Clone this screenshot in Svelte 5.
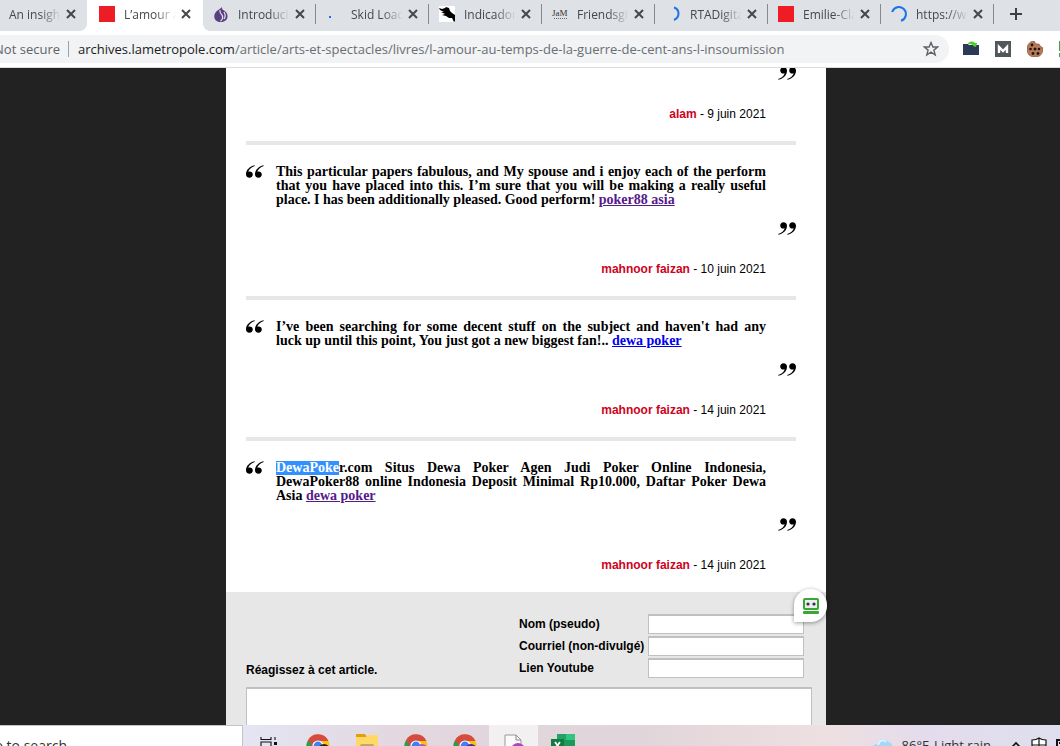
<script lang="ts">
    type Tab = { title: string; icon: string; active?: boolean };
    type Comment = { lines: string[]; selected?: string; link?: string; visited?: boolean; author: string; date: string };

    // Browser tabs, left to right
    const tabs: Tab[] = [
        { title: 'An insight', icon: 'yellow' },
        { title: 'L’amour au', icon: 'red', active: true },
        { title: 'Introducin', icon: 'tor' },
        { title: 'Skid Load', icon: 'dot' },
        { title: 'Indicador', icon: 'bird' },
        { title: 'Friendsgiv', icon: 'jam' },
        { title: 'RTADigital', icon: 'arc' },
        { title: 'Emilie-Cla', icon: 'red' },
        { title: 'https://ww', icon: 'spinner' }
    ];

    const comments: Comment[] = [
        { lines: [], author: 'alam', date: '9 juin 2021' },
        {
            lines: [
                'This particular papers fabulous, and My spouse and i enjoy each of the perform',
                'that you have placed into this. I’m sure that you will be making a really useful',
                'place. I has been additionally pleased. Good perform!'
            ],
            link: 'poker88 asia',
            visited: true,
            author: 'mahnoor faizan',
            date: '10 juin 2021'
        },
        {
            lines: [
                "I’ve been searching for some decent stuff on the subject and haven't had any",
                'luck up until this point, You just got a new biggest fan!..'
            ],
            link: 'dewa poker',
            author: 'mahnoor faizan',
            date: '14 juin 2021'
        },
        {
            selected: 'DewaPoke',
            lines: [
                'r.com Situs Dewa Poker Agen Judi Poker Online Indonesia,',
                'DewaPoker88 online Indonesia Deposit Minimal Rp10.000, Daftar Poker Dewa',
                'Asia'
            ],
            link: 'dewa poker',
            visited: true,
            author: 'mahnoor faizan',
            date: '14 juin 2021'
        }
    ];

    const fields = [
        { id: 'nom', label: 'Nom (pseudo)' },
        { id: 'courriel', label: 'Courriel (non-divulgé)' },
        { id: 'youtube', label: 'Lien Youtube' }
    ];

    const quotePath =
        'M5.4 .2C7.700 .2 9 1.700 9 3.800C9 8 5.500 11.600 .5 12.800L.2 12.100C3.700 10.800 6 8.800 6.800 6.200C4.500 7.200 2.200 5.800 2.200 3.400C2.200 1.600 3.600 .2 5.400 .2Z';
</script>

{#snippet favicon(kind: string)}
    <svg class="favicon" viewBox="0 0 16 16" aria-hidden="true">
        {#if kind === 'yellow'}
            <rect width="16" height="16" fill="#ffee00" />
        {:else if kind === 'red'}
            <rect width="16" height="16" fill="#ee1c25" />
        {:else if kind === 'tor'}
            <path d="M8.500 1C9.500 2.500 8.500 3 11 4.500C17 8 15 16 8 16C0 16 -.5 8 4.500 4.500C6.500 3.200 8 2.500 8.500 1Z" fill="#59407f" />
            <path d="M7 4C6 7 9 8 9.500 10S9 14 7.500 15M11 6C12.500 8.500 12.500 11 11 13" fill="none" stroke="#e8e0f0" stroke-width="1.2" />
        {:else if kind === 'dot'}
            <rect x="3" y="10" width="2" height="2" fill="#1a73e8" />
        {:else if kind === 'bird'}
            <rect width="16" height="16" fill="#fff" />
            <path d="M0 2L3 3L6 2L7 1L10 2L11 5L13 7L16 9V15L15 16L13 12L10 12L7 10L3 9L6 8L2 6L5 6L1 4Z" fill="#000" />
        {:else if kind === 'jam'}
            <text x="0" y="10" font-family="Liberation Serif" font-size="9" fill="#333">JaM</text>
            <path d="M2 12.500H15" stroke="#666" stroke-dasharray="1 1" />
        {:else if kind === 'arc'}
            <path d="M9 1.500C15 3.500 15 11.500 9 14" fill="none" stroke="#1a73e8" stroke-width="2" />
        {:else}
            <path d="M1.200 6A7 7 0 1 1 10 14.700" fill="none" stroke="#1a73e8" stroke-width="2" />
        {/if}
    </svg>
{/snippet}

{#snippet chrome(badge: string)}
    <svg width="24" height="24" viewBox="0 0 24 24" aria-hidden="true">
        <circle cx="12" cy="12" r="11.500" fill="#fbc116" />
        <path d="M12 12L2 6.200A11.500 11.500 0 0 0 12 23.500L17 15Z" fill="#21a05a" />
        <path d="M2 6.200A11.500 11.500 0 0 1 22.500 7H12L7 13Z" fill="#d64b3f" />
        <circle cx="12" cy="12" r="5.600" fill="#fff" />
        <circle cx="12" cy="12" r="4.400" fill="#3b82f6" />
        <circle cx="18" cy="16" r="6" fill={badge} />
    </svg>
{/snippet}

<div class="window">
    <nav class="tabs">
        {#each tabs as tab, i}
            <div class="tab" class:active={tab.active} class:first={i === 0}>
                {@render favicon(tab.icon)}
                <span class="title">{tab.title}</span>
                <button class="close" aria-label="Close tab">
                    <svg width="10" height="10" viewBox="0 0 10 10"><path d="M1 1L9 9M9 1L1 9" stroke="#44474b" stroke-width="2" /></svg>
                </button>
            </div>
        {/each}
        <button class="new-tab" aria-label="New tab">
            <svg width="12" height="12" viewBox="0 0 12 12"><path d="M6 0V12M0 6H12" stroke="#3c4043" stroke-width="2" /></svg>
        </button>
    </nav>

    <div class="toolbar">
        <div class="omnibox">
            <span class="secure">Not secure</span>
            <span class="url">archives.lametropole.com<span class="path">/article/arts-et-spectacles/livres/l-amour-au-temps-de-la-guerre-de-cent-ans-l-insoumission</span></span>
            <button class="star" aria-label="Bookmark">
                <svg width="16" height="16" viewBox="0 0 16 16"><path d="M8 1.500L9.900 6H14.600L10.900 9.100L12.200 14L8 11.200L3.800 14L5.100 9.100L1.400 6H6.100Z" fill="none" stroke="#5f6368" stroke-width="1.400" /></svg>
            </button>
        </div>
        <div class="extensions">
            <svg width="16" height="16" viewBox="0 0 16 16">
                <path d="M0 3H5L6 4H16V14H0Z" fill="#2c3a56" />
                <path d="M5 3C6 0 10 0 12 2L14 2L13 6L10 5L10 4C8 3 7 3 5 3Z" fill="#4bd32c" />
            </svg>
            <svg width="16" height="16" viewBox="0 0 16 16">
                <rect width="16" height="16" fill="#50575a" />
                <path d="M4 12V6L8 10L12 6V12" fill="none" stroke="#fff" stroke-width="2.400" />
            </svg>
            <svg width="16" height="16" viewBox="0 0 16 16">
                <path d="M7 0L9 3L12 3L13 5L16 7C16 13 13 16 8 16C3 16 0 13 0 8C0 4 3 0 7 0Z" fill="#b87a57" stroke="#6f4128" stroke-width=".6" />
                <g fill="#24140e"><circle cx="5" cy="4" r="1.400" /><circle cx="3.500" cy="8" r="1.300" /><circle cx="8" cy="8" r="1.500" /><circle cx="12" cy="8" r="1.300" /><circle cx="6" cy="12.500" r="1.400" /><circle cx="11" cy="12.500" r="1.400" /></g>
            </svg>
            <svg width="16" height="16" viewBox="0 0 16 16"><rect width="16" height="16" fill="#43a047" /><rect y="10" width="16" height="2" fill="#fff" /></svg>
        </div>
    </div>

    <main>
        <article>
            {#each comments as comment}
                <section class="comment">
                    {#if comment.lines.length}
                        <div class="body">
                            <svg class="open" width="18" height="13" viewBox="0 0 18 13" aria-hidden="true">
                                <g transform="rotate(180 9 6.500)"><path d={quotePath} /><path d={quotePath} transform="translate(9 0)" /></g>
                            </svg>
                            <p>
                                {#each comment.lines as line, n}
                                    <span class="line" class:last={n === comment.lines.length - 1}
                                        >{#if n === 0 && comment.selected}<mark>{comment.selected}</mark>{/if}{line}{#if n === comment.lines.length - 1}{' '}<a href="#lien" class:visited={comment.visited}>{comment.link}</a>{/if}</span
                                    >
                                {/each}
                            </p>
                        </div>
                    {/if}
                    <svg class="end" width="18" height="13" viewBox="0 0 18 13" aria-hidden="true">
                        <path d={quotePath} /><path d={quotePath} transform="translate(9 0)" />
                    </svg>
                    <div class="meta"><span class="author">{comment.author}</span> - {comment.date}</div>
                </section>
            {/each}

            <form>
                <div class="form-top">
                    <label for="message">Réagissez à cet article.</label>
                    <div class="fields">
                        {#each fields as field}
                            <label for={field.id}>{field.label}</label>
                            <input id={field.id} type="text" />
                        {/each}
                    </div>
                </div>
                <textarea id="message"></textarea>
                <!-- Password manager bubble over the form corner -->
                <button type="button" class="bubble" aria-label="RoboForm">
                    <svg width="16" height="16" viewBox="0 0 16 16">
                        <rect x="1" y="1" width="14" height="10" rx="1" fill="#ececf2" stroke="#38a832" stroke-width="2" />
                        <circle cx="5" cy="6" r="1.600" fill="#333" /><circle cx="11" cy="6" r="1.600" fill="#333" />
                        <rect y="13" width="16" height="3" rx="1" fill="#38a832" />
                    </svg>
                </button>
            </form>
        </article>
    </main>

    <footer>
        <div class="taskbar">
            <div class="search">Type here to search</div>
            <div class="slot">
                <svg width="18" height="16" viewBox="0 0 18 16"><path d="M1 0V2.500H11V0M1 16V5H11V16M15 0V3M15 10V16" fill="none" stroke="#111" stroke-width="1.100" /><rect x="14" y="5" width="3" height="3" fill="#111" /></svg>
            </div>
            <div class="slot">{@render chrome('#2b211e')}</div>
            <div class="slot">
                <svg width="22" height="20" viewBox="0 0 22 20"><path d="M0 0H9L11 3H0Z" fill="#dfa00c" /><path d="M0 3H10L12 1H22V20H0Z" fill="#ffd866" /><rect x="4" y="10" width="14" height="8" rx="2" fill="#b8aa70" /></svg>
            </div>
            <div class="slot">{@render chrome('#a05bd0')}</div>
            <div class="slot">{@render chrome('#4a24a6')}</div>
            <div class="slot current">
                <svg width="20" height="24" viewBox="0 0 20 24"><path d="M1 1H12L17 6V23H1Z" fill="#fafafa" stroke="#999" /><path d="M12 1V6H17" fill="none" stroke="#888" /><circle cx="14" cy="16" r="7" fill="#ab47bc" /></svg>
            </div>
            <div class="slot">
                <svg width="24" height="22" viewBox="0 0 24 22"><rect x="6" width="9" height="11" fill="#21a366" /><rect x="15" width="9" height="6" fill="#33c481" /><rect x="6" y="6" width="18" height="16" fill="#1b9a5b" /><rect y="5" width="13" height="13" fill="#107c41" /><path d="M4 8L9 15M9 8L4 15" stroke="#fff" stroke-width="1.800" /></svg>
            </div>
            <div class="tray">
                <svg width="22" height="14" viewBox="0 0 22 14"><path d="M2 14C-1 10 2 6 6 6C7 1 15-1 17 4C21 4 23 9 20 14Z" fill="#a5d8f5" /><path d="M7 7C8 2 13 1 15 4" fill="none" stroke="#dff3ff" stroke-width="2" /></svg>
                <span class="weather">86°F <span>Light rain</span></span>
                <svg class="up" width="12" height="8" viewBox="0 0 12 8"><path d="M1 7L6 2L11 7" fill="none" stroke="#111" stroke-width="1.600" /></svg>
                <svg width="16" height="16" viewBox="0 0 16 16"><path d="M8 1C6 2.500 3 3 1 3V8C1 12 4 14 8 15.500C12 14 15 12 15 8V3C13 3 10 2.500 8 1ZM8 1V15M1 8H15" fill="#fff" stroke="#111" stroke-width="1.200" /></svg>
                <svg class="cut" width="4" height="16" viewBox="0 0 4 16"><path d="M4 3H1V12H4M3 6H4" fill="none" stroke="#111" stroke-width="2" /></svg>
            </div>
        </div>
    </footer>
</div>

<style>
    :global(body) {
        margin: 0;
    }

    .window {
        display: flex;
        flex-direction: column;
        height: 100vh;
        overflow: hidden;
        background: #222;
        font-family: 'Open Sans', 'Noto Sans', sans-serif;
    }

    button {
        display: flex;
        padding: 0;
        border: 0;
        background: none;
    }

    svg {
        flex: none;
    }

    /* Tab strip */
    .tabs {
        display: flex;
        flex: none;
        height: 31px;
        overflow: hidden;
        background: #dee1e6;
        color: #45484d;
        font-size: 12px;
    }

    .tab {
        position: relative;
        display: flex;
        flex: none;
        align-items: center;
        box-sizing: border-box;
        width: 113px;
        height: 28px;
        padding: 0 11px 0 10px;
    }

    .tab.first {
        justify-content: flex-end;
        width: 87px;
        overflow: hidden;
    }

    .tab:not(.active, .first)::after {
        content: '';
        position: absolute;
        top: 4px;
        right: 0;
        width: 1px;
        height: 20px;
        background: #85888d;
    }

    .tab.active {
        width: 116px;
        height: 31px;
        padding: 0 12px 3px;
        background: #fff;
    }

    .tab.active::before,
    .tab.active::after {
        content: '';
        position: absolute;
        bottom: 0;
        width: 8px;
        height: 8px;
    }

    .tab.active::before {
        right: 100%;
        background: radial-gradient(circle at 0 0, transparent 8px, #fff 8px);
    }

    .tab.active::after {
        left: 100%;
        background: radial-gradient(circle at 100% 0, transparent 8px, #fff 8px);
    }

    .favicon {
        width: 16px;
        height: 16px;
    }

    .title {
        flex: none;
        width: 52px;
        margin: 0 5px 0 9px;
        overflow: hidden;
        white-space: nowrap;
        mask-image: linear-gradient(to right, #000 60%, transparent);
    }

    .new-tab {
        align-items: center;
        height: 28px;
        margin-left: 16px;
    }

    /* Address bar */
    .toolbar {
        display: flex;
        flex: none;
        align-items: center;
        height: 36px;
        border-bottom: 1px solid #dadce0;
        background: #fff;
        overflow: hidden;
    }

    .omnibox {
        display: flex;
        flex: 1;
        align-items: center;
        min-width: 0;
        height: 28px;
        border-radius: 0 14px 14px 0;
        background: #f1f3f4;
        font-size: 13px;
        white-space: nowrap;
    }

    .secure {
        display: flex;
        justify-content: flex-end;
        width: 60px;
        margin-right: 8px;
        color: #5f6368;
    }

    .url {
        position: relative;
        flex: 1;
        padding-left: 10px;
        color: #202124;
    }

    .url::before {
        content: '';
        position: absolute;
        top: 1px;
        left: 0;
        width: 1px;
        height: 16px;
        background: #9aa0a6;
    }

    .path {
        color: #6a6e73;
    }

    .star {
        margin-right: 10px;
    }

    .extensions {
        display: flex;
        flex: none;
        gap: 16px;
        width: 97px;
        padding-left: 14px;
    }

    /* Page */
    main {
        flex: 1;
        min-height: 0;
        padding-right: 8px;
        overflow: hidden;
    }

    article {
        max-width: 600px;
        margin: -1px auto 0;
        background: #fff;
        font-family: 'Liberation Sans', Arial, sans-serif;
        font-size: 12px;
        line-height: 14px;
    }

    .comment {
        display: flex;
        flex-direction: column;
        margin: 0 30px 0 20px;
        padding-bottom: 20px;
    }

    .comment + .comment {
        padding-top: 20px;
        border-top: 4px solid #e7e7e7;
    }

    .body {
        display: flex;
        gap: 12px;
        margin: 0 30px 15px 0;
    }

    p {
        flex: 1;
        margin: 0;
        font-family: 'Liberation Serif', Georgia, serif;
        font-size: 14px;
        font-weight: bold;
    }

    .line {
        display: block;
        text-align-last: justify;
        white-space: nowrap;
    }

    .line.last {
        text-align-last: left;
    }

    mark {
        display: inline-block;
        background: #3390ff;
        color: #fff;
    }

    p a {
        color: #00e;
    }

    p a.visited {
        color: #551a8b;
    }

    .end {
        align-self: flex-end;
    }

    .meta {
        margin: 27px 30px 0 0;
        text-align: right;
    }

    .author {
        color: #d0021b;
        font-weight: bold;
    }

    /* Reply form */
    form {
        position: relative;
        padding: 22px 14px 0 20px;
        background: #e7e7e7;
        font-weight: bold;
    }

    .form-top {
        display: flex;
        align-items: flex-end;
        justify-content: space-between;
        margin: 0 8px 9px 0;
    }

    .form-top > label {
        margin-bottom: 1px;
    }

    .fields {
        display: grid;
        grid-template-columns: 129px 156px;
        row-gap: 2px;
    }

    .fields label {
        line-height: 20px;
    }

    input,
    textarea {
        display: block;
        box-sizing: border-box;
        border: 1px solid #c0c0c0;
        border-top-width: 2px;
        background: #fff;
    }

    input {
        width: 100%;
        height: 20px;
    }

    textarea {
        width: 100%;
        height: 120px;
        resize: none;
    }

    .bubble {
        position: absolute;
        top: -3px;
        right: -1px;
        align-items: center;
        justify-content: center;
        width: 33px;
        height: 33px;
        border-radius: 16px 16px 16px 0;
        background: #fff;
        box-shadow: 0 1px 4px rgba(0, 0, 0, 0.4);
    }

    /* Taskbar, cut off by the lower edge of the window */
    footer {
        flex: none;
        height: 21px;
        overflow: hidden;
        background: linear-gradient(to right, #e4e4f2 24%, #e3d7e0 38%, #e0d5da 60%, #eee0e1 78%, #e4dcec 87%, #dedfee);
    }

    .taskbar {
        display: flex;
        height: 40px;
        color: #333;
        font-size: 14px;
    }

    .search {
        box-sizing: border-box;
        display: flex;
        align-items: center;
        justify-content: flex-end;
        width: 243px;
        margin-right: 1px;
        padding-right: 175px;
        border: solid #c4c4c8;
        border-width: 1px 1px 0 0;
        background: #fff;
        white-space: nowrap;
    }

    .slot {
        display: flex;
        align-items: flex-start;
        justify-content: center;
        box-sizing: border-box;
        width: 49px;
        padding-top: 9px;
    }

    .slot.current {
        background: #f3f0f1;
    }

    .slot:nth-child(2) {
        padding-top: 12px;
    }

    .tray {
        display: flex;
        align-items: center;
        gap: 9px;
        margin-left: auto;
        white-space: nowrap;
    }

    .weather {
        font-size: 13px;
    }

    .weather span {
        margin-left: 2px;
    }

    .up {
        margin-left: 10px;
    }
</style>
